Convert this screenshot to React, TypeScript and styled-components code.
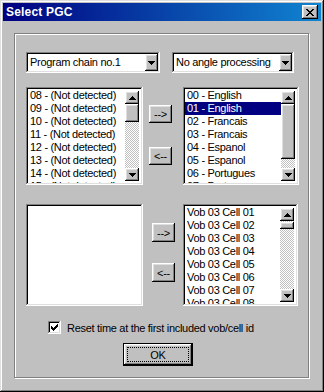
import styled, { createGlobalStyle } from "styled-components";

const GlobalStyle = createGlobalStyle`
  html, body {
    margin: 0;
    padding: 0;
    background: #c0c0c0;
  }
  body {
    font-family: "Liberation Sans", Arial, sans-serif;
    font-size: 11px;
    letter-spacing: -0.3px;
    color: #000;
  }
`;

// win98 bevels
const raised = `box-shadow: inset -1px -1px #000, inset 1px 1px #fff, inset -2px -2px #808080, inset 2px 2px #dfdfdf;`;
const sunken = `box-shadow: inset -1px -1px #fff, inset 1px 1px #808080, inset -2px -2px #dfdfdf, inset 2px 2px #000;`;

const chapters = [8, 9, 10, 11, 12, 13, 14, 15].map(
  (n) => `${String(n).padStart(2, "0")} - (Not detected)`
);
const audio = [
  "00 - English",
  "01 - English",
  "02 - Francais",
  "03 - Francais",
  "04 - Espanol",
  "05 - Espanol",
  "06 - Portugues",
  "07 - Portugues",
];
const cells = [1, 2, 3, 4, 5, 6, 7, 8].map((n) => `Vob 03 Cell 0${n}`);

const ArrowDown = () => (
  <svg width="7" height="4" viewBox="0 0 7 4" shapeRendering="crispEdges">
    <path d="M0 0h7v1H0zM1 1h5v1H1zM2 2h3v1H2zM3 3h1v1H3z" fill="#000" />
  </svg>
);

const ArrowUp = () => (
  <svg width="7" height="4" viewBox="0 0 7 4" shapeRendering="crispEdges">
    <path d="M3 0h1v1H3zM2 1h3v1H2zM1 2h5v1H1zM0 3h7v1H0z" fill="#000" />
  </svg>
);

type ListProps = {
  items: string[];
  width: number;
  height: number;
  ml?: number;
  selected?: number;
  thumb?: { top: number; size: number };
};

function ListBox({ items, width, height, ml, selected, thumb }: ListProps) {
  return (
    <List $w={width} $h={height} $ml={ml}>
      <Items>
        {items.map((it, i) => (
          <Item key={it + i} $selected={i === selected}>
            {it}
          </Item>
        ))}
      </Items>
      {thumb && (
        <ScrollBar>
          <ScrollArrow>
            <ArrowUp />
          </ScrollArrow>
          <Track>
            <Thumb $top={thumb.top} $size={thumb.size} />
          </Track>
          <ScrollArrow>
            <ArrowDown />
          </ScrollArrow>
        </ScrollBar>
      )}
    </List>
  );
}

export default function App() {
  return (
    <>
      <GlobalStyle />
      <Window>
        <TitleBar>
          <Title>Select PGC</Title>
          <CloseButton>
            <svg width="8" height="7" viewBox="0 0 8 7" shapeRendering="crispEdges">
              <path
                d="M0 0h2v1H0zM6 0h2v1H6zM1 1h2v1H1zM5 1h2v1H5zM2 2h4v1H2zM3 3h2v1H3zM2 4h4v1H2zM1 5h2v1H1zM5 5h2v1H5zM0 6h2v1H0zM6 6h2v1H6z"
                fill="#000"
              />
            </svg>
          </CloseButton>
        </TitleBar>
        <Body>
          <Group>
            <Row>
              <Combo $w={134}>
                <ComboText>Program chain no.1</ComboText>
                <ComboButton>
                  <ArrowDown />
                </ComboButton>
              </Combo>
              <Combo $w={122} $ml={12}>
                <ComboText>No angle processing</ComboText>
                <ComboButton>
                  <ArrowDown />
                </ComboButton>
              </Combo>
            </Row>

            <Row $mt={14}>
              <ListBox items={chapters} width={117} height={98} thumb={{ top: 0, size: 18 }} />
              <ButtonColumn $ml={6} $mt={18} $gap={24}>
                <SmallButton $h={18}>--&gt;</SmallButton>
                <SmallButton $h={18}>&lt;--</SmallButton>
              </ButtonColumn>
              <ListBox
                items={audio}
                width={116}
                height={98}
                ml={11}
                selected={1}
                thumb={{ top: 0, size: 55 }}
              />
            </Row>

            <Row $mt={19}>
              <ListBox items={[]} width={117} height={102} />
              <ButtonColumn $ml={9} $mt={19} $gap={21}>
                <SmallButton $h={19}>--&gt;</SmallButton>
                <SmallButton $h={19}>&lt;--</SmallButton>
              </ButtonColumn>
              <ListBox items={cells} width={115} height={102} ml={8} thumb={{ top: 1, size: 7 }} />
            </Row>

            <CheckRow>
              <CheckBox>
                <svg width="7" height="7" viewBox="0 0 7 7" shapeRendering="crispEdges">
                  <path
                    d="M6 0h1v1H6zM5 1h2v1H5zM0 2h1v1H0zM4 2h3v1H4zM0 3h2v1H0zM3 3h3v1H3zM0 4h5v1H0zM1 5h3v1H1zM2 6h1v1H2z"
                    fill="#000"
                  />
                </svg>
              </CheckBox>
              <span>Reset time at the first included vob/cell id</span>
            </CheckRow>

            <OkButton>
              <Focus>OK</Focus>
            </OkButton>
          </Group>
        </Body>
      </Window>
    </>
  );
}

const Window = styled.div`
  width: 324px;
  height: 392px;
  box-sizing: border-box;
  padding: 3px;
  background: #c0c0c0;
  box-shadow: inset -1px -1px #000, inset 1px 1px #dfdfdf, inset -2px -2px #808080,
    inset 2px 2px #fff;
  display: flex;
  flex-direction: column;
`;

const TitleBar = styled.div`
  height: 18px;
  display: flex;
  align-items: center;
  padding: 0 3px 0 3px;
  background: linear-gradient(90deg, #000080, #1084d0);
`;

const Title = styled.span`
  color: #fff;
  font-weight: bold;
  font-size: 12px;
  letter-spacing: 0.2px;
`;

const CloseButton = styled.div`
  margin-left: auto;
  width: 16px;
  height: 14px;
  background: #c0c0c0;
  ${raised}
  display: flex;
  align-items: center;
  justify-content: center;
`;

const Body = styled.div`
  flex: 1;
  display: flex;
  padding: 12px 12px 11px 11px;
`;

const Group = styled.div`
  flex: 1;
  border: 1px solid #808080;
  box-shadow: inset 1px 1px #fff, 1px 1px #fff;
  padding: 18px 0 0 11px;
  display: flex;
  flex-direction: column;
`;

const Row = styled.div<{ $mt?: number }>`
  display: flex;
  align-items: flex-start;
  margin-top: ${(p) => p.$mt ?? 0}px;
`;

const Combo = styled.div<{ $w: number; $ml?: number }>`
  width: ${(p) => p.$w}px;
  height: 21px;
  margin-left: ${(p) => p.$ml ?? 0}px;
  box-sizing: border-box;
  padding: 2px;
  background: #fff;
  ${sunken}
  display: flex;
  align-items: stretch;
`;

const ComboText = styled.span`
  flex: 1;
  padding-left: 2px;
  line-height: 17px;
  white-space: nowrap;
  overflow: hidden;
`;

const ComboButton = styled.div`
  width: 13px;
  background: #c0c0c0;
  ${raised}
  display: flex;
  align-items: center;
  justify-content: center;
`;

const List = styled.div<{ $w: number; $h: number; $ml?: number }>`
  width: ${(p) => p.$w}px;
  height: ${(p) => p.$h}px;
  margin-left: ${(p) => p.$ml ?? 0}px;
  box-sizing: border-box;
  padding: 2px;
  background: #fff;
  ${sunken}
  display: flex;
`;

const Items = styled.div`
  flex: 1;
  min-width: 0;
  overflow: hidden;
`;

const Item = styled.div<{ $selected?: boolean }>`
  height: 13px;
  line-height: 13px;
  padding-left: 2px;
  white-space: nowrap;
  background: ${(p) => (p.$selected ? "#000080" : "transparent")};
  color: ${(p) => (p.$selected ? "#fff" : "#000")};
`;

const ScrollBar = styled.div`
  width: 14px;
  margin: 2px 2px 2px 0;
  display: flex;
  flex-direction: column;
`;

const ScrollArrow = styled.div`
  height: 13px;
  background: #c0c0c0;
  ${raised}
  display: flex;
  align-items: center;
  justify-content: center;
`;

const Track = styled.div`
  flex: 1;
  background-image: conic-gradient(#c0c0c0 25%, #fff 0 50%, #c0c0c0 0 75%, #fff 0);
  background-size: 2px 2px;
`;

const Thumb = styled.div<{ $top: number; $size: number }>`
  margin-top: ${(p) => p.$top}px;
  height: ${(p) => p.$size}px;
  background: #c0c0c0;
  ${raised}
`;

const ButtonColumn = styled.div<{ $ml: number; $mt: number; $gap: number }>`
  display: flex;
  flex-direction: column;
  gap: ${(p) => p.$gap}px;
  margin-left: ${(p) => p.$ml}px;
  margin-top: ${(p) => p.$mt}px;
`;

const SmallButton = styled.div<{ $h: number }>`
  width: 23px;
  height: ${(p) => p.$h}px;
  background: #c0c0c0;
  ${raised}
  display: flex;
  align-items: center;
  justify-content: center;
  font-size: 11px;
`;

const CheckRow = styled.label`
  display: flex;
  align-items: center;
  gap: 6px;
  margin: 15px 0 0 22px;
  white-space: nowrap;
`;

const CheckBox = styled.div`
  width: 13px;
  height: 13px;
  box-sizing: border-box;
  background: #fff;
  ${sunken}
  display: flex;
  align-items: center;
  justify-content: center;
`;

const OkButton = styled.div`
  width: 70px;
  height: 23px;
  box-sizing: border-box;
  margin: 9px 0 0 97px;
  border: 1px solid #000;
  background: #c0c0c0;
  ${raised}
  padding: 3px;
  display: flex;
`;

const Focus = styled.div`
  flex: 1;
  border: 1px dotted #000;
  display: flex;
  align-items: center;
  justify-content: center;
`;
